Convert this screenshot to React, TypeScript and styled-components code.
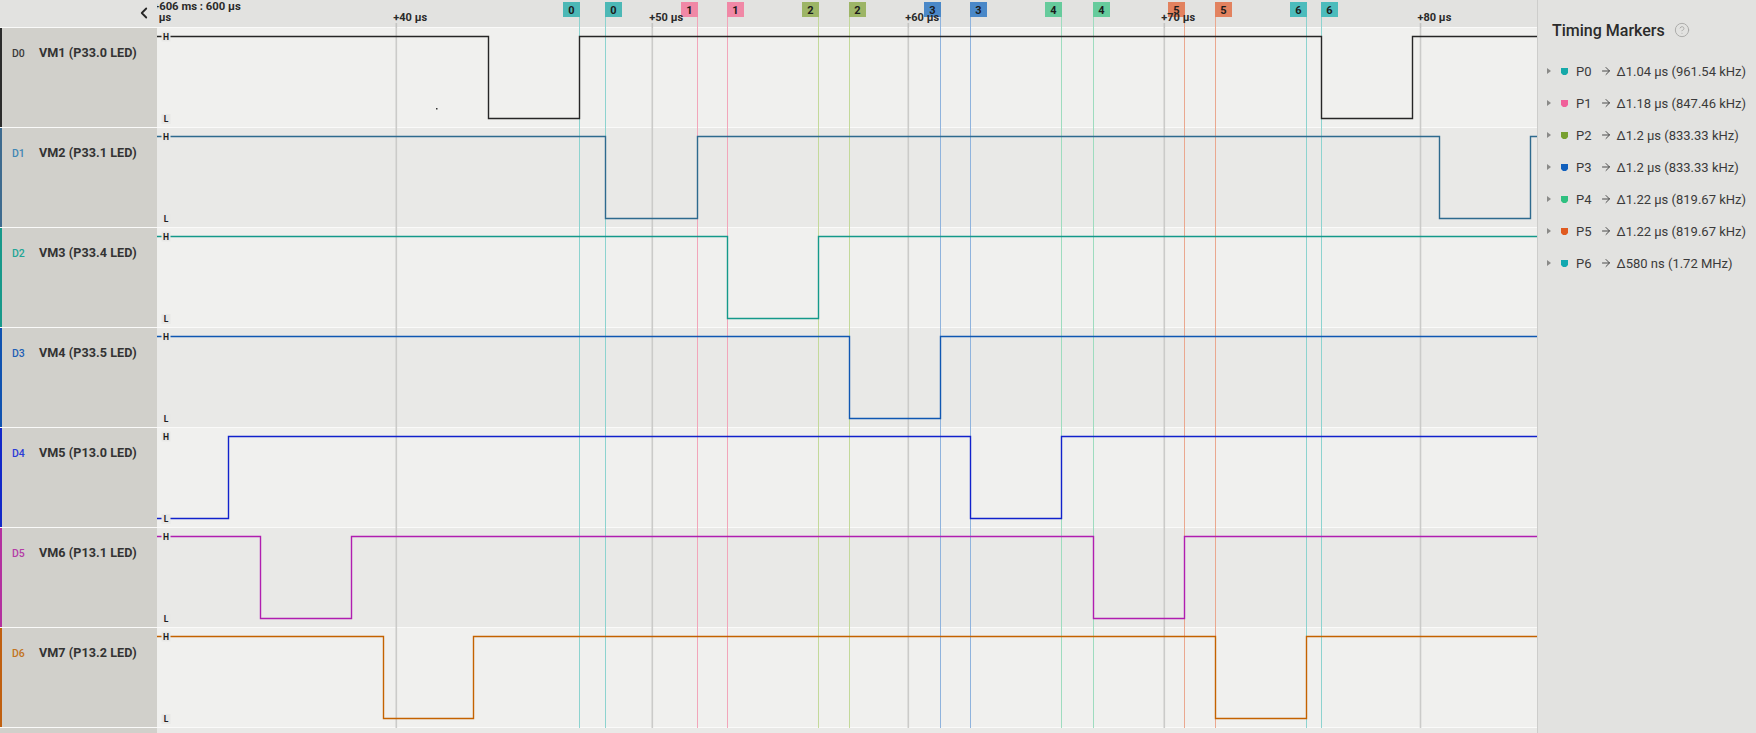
import React from "react";
import styled, { createGlobalStyle } from "styled-components";
import { ChevronLeft, CircleHelp, ArrowRight } from "lucide-react";

const GlobalStyle = createGlobalStyle`
  html, body { margin: 0; padding: 0; background: #e2e2e0; }
  body { font-family: Roboto, "Noto Sans", "Liberation Sans", sans-serif; overflow: hidden; }
  #root { width: 1756px; height: 733px; }
`;

const PLOT_X = 157;
const PLOT_W = 1380;
const ROW_H = 100;
const Y_H = 8.5;
const Y_L = 90.5;

type Channel = {
  id: string;
  name: string;
  color: string;
  tag: string;
  bar: string;
  start: "H" | "L";
  edges: number[];
};

const channels: Channel[] = [
  { id: "D0", name: "VM1 (P33.0 LED)", color: "#262626", tag: "#3a3a3a", bar: "#2b2b2b", start: "H", edges: [488, 579, 1321, 1412] },
  { id: "D1", name: "VM2 (P33.1 LED)", color: "#2e6a8e", tag: "#3f86b4", bar: "#3e6b8f", start: "H", edges: [605, 697, 1439, 1530] },
  { id: "D2", name: "VM3 (P33.4 LED)", color: "#14998a", tag: "#22a596", bar: "#17998a", start: "H", edges: [727, 818] },
  { id: "D3", name: "VM4 (P33.5 LED)", color: "#0f57b2", tag: "#1e5fb5", bar: "#1052b0", start: "H", edges: [849, 940] },
  { id: "D4", name: "VM5 (P13.0 LED)", color: "#1122cc", tag: "#2b3bd6", bar: "#1228c8", start: "L", edges: [228, 970, 1061] },
  { id: "D5", name: "VM6 (P13.1 LED)", color: "#b01eb0", tag: "#b43ca6", bar: "#b3309f", start: "H", edges: [260, 351, 1093, 1184] },
  { id: "D6", name: "VM7 (P13.2 LED)", color: "#c46200", tag: "#c27320", bar: "#c06010", start: "H", edges: [383, 473, 1215, 1306] },
];

type Marker = { n: string; flag: string; line: string; icon: string; a: number; b: number; delta: string };

const markers: Marker[] = [
  { n: "0", flag: "#4cb8b6", line: "#8dd3cf", icon: "#16a9a9", a: 579, b: 605, delta: "Δ1.04 µs (961.54 kHz)" },
  { n: "1", flag: "#f088a6", line: "#f2a6ba", icon: "#f0609a", a: 697, b: 727, delta: "Δ1.18 µs (847.46 kHz)" },
  { n: "2", flag: "#9db566", line: "#c3d99a", icon: "#78a030", a: 818, b: 849, delta: "Δ1.2 µs (833.33 kHz)" },
  { n: "3", flag: "#4a88c8", line: "#8fb3dd", icon: "#1160bd", a: 940, b: 970, delta: "Δ1.2 µs (833.33 kHz)" },
  { n: "4", flag: "#66cb9c", line: "#9edcbf", icon: "#2fc080", a: 1061, b: 1093, delta: "Δ1.22 µs (819.67 kHz)" },
  { n: "5", flag: "#e2825f", line: "#eaa88f", icon: "#e05a20", a: 1184, b: 1215, delta: "Δ1.22 µs (819.67 kHz)" },
  { n: "6", flag: "#4cbcbc", line: "#8dd3cf", icon: "#12a8b0", a: 1306, b: 1321, delta: "Δ580 ns (1.72 MHz)" },
];

const grid = [
  { x: 140.3, label: "+30 µs" },
  { x: 396.3, label: "+40 µs" },
  { x: 652.3, label: "+50 µs" },
  { x: 908.3, label: "+60 µs" },
  { x: 1164.3, label: "+70 µs" },
  { x: 1420.5, label: "+80 µs" },
];

const lx = (x: number) => x - PLOT_X;

const Page = styled.div`
  display: flex;
  width: 1756px;
  height: 733px;
  overflow: hidden;
`;

const Scope = styled.div`
  width: 1537px;
  display: flex;
  flex-direction: column;
  background: #e9e9e7;
`;

const HeaderBar = styled.div`
  display: flex;
  height: 28px;
  flex: none;
`;

const HeaderLeft = styled.div`
  width: 157px;
  height: 28px;
  flex: none;
  box-sizing: border-box;
  border-bottom: 1px solid #fafaf9;
  background: #e2e2e0;
  display: flex;
  align-items: center;
  justify-content: flex-end;
  padding: 0 4px 1px 0;
  color: #262626;
`;

const AxisSvg = styled.svg`
  display: block;
  flex: none;
  font-family: Roboto, "Liberation Sans", sans-serif;
`;

const Row = styled.div`
  display: flex;
  height: ${ROW_H}px;
  flex: none;
`;

const LabelCell = styled.div<{ $bar: string }>`
  width: 157px;
  height: 100px;
  flex: none;
  border-bottom: 1px solid #fafaf9;
  background: #d1d0cb;
  box-shadow: inset 2px 0 0 ${(p) => p.$bar};
  display: flex;
  align-items: baseline;
  padding: 17px 0 0 12px;
  box-sizing: border-box;
`;

const Tag = styled.span<{ $color: string }>`
  width: 27px;
  font-size: 10.5px;
  font-weight: 500;
  color: ${(p) => p.$color};
`;

const ChannelName = styled.span`
  font-size: 12.6px;
  font-weight: 700;
  color: #333;
  letter-spacing: 0.05px;
  white-space: nowrap;
`;

const PlotSvg = styled.svg`
  display: block;
  flex: none;
  font-family: Roboto, "Liberation Sans", sans-serif;
`;

const Filler = styled.div`
  flex: 1;
  display: flex;
`;

const FillerLabel = styled.div`
  width: 157px;
  background: #d1d0cb;
`;

const FillerPlot = styled.div`
  flex: 1;
  background: #e9e9e7;
`;

const Panel = styled.aside`
  flex: 1;
  background: #e2e2e0;
  border-left: 1px solid #cdcdcb;
  display: flex;
  flex-direction: column;
  color: #3a3a3a;
`;

const PanelTitle = styled.div`
  display: flex;
  align-items: center;
  gap: 9px;
  padding: 20px 0 0 14px;
  height: 20px;
  font-size: 16px;
  font-weight: 500;
  color: #2b2b2b;
  margin-bottom: 15px;
`;

const MarkerList = styled.ul`
  list-style: none;
  margin: 0;
  padding: 0;
`;

const MarkerItem = styled.li`
  display: flex;
  align-items: center;
  height: 32px;
  padding-left: 9px;
  font-size: 13px;
  white-space: nowrap;
`;

const Caret = styled.span`
  width: 0;
  height: 0;
  border-top: 3px solid transparent;
  border-bottom: 3px solid transparent;
  border-left: 4px solid #8a8a88;
  margin-right: 10px;
`;

const MarkerIcon = styled.svg`
  display: block;
  margin-right: 8px;
`;

const MarkerName = styled.span`
  color: #3a3a3a;
`;

const Arrow = styled.span`
  display: flex;
  align-items: center;
  margin: 0 5px 0 8px;
  color: #4a4a4a;
`;

const Delta = styled.span`
  color: #3a3a3a;
`;

function signalPath(ch: Channel): string {
  let level = ch.start;
  let d = `M0 ${level === "H" ? Y_H : Y_L}`;
  for (const e of ch.edges) {
    const x = lx(e) + 0.5;
    d += ` H${x}`;
    level = level === "H" ? "L" : "H";
    d += ` V${level === "H" ? Y_H : Y_L}`;
  }
  d += ` H${PLOT_W}`;
  return d;
}

function VerticalLines({ y1 }: { y1: number }) {
  return (
    <g>
      {grid.map((g) => (
        <line key={g.label} x1={lx(g.x)} x2={lx(g.x)} y1={0} y2={y1} stroke="#cbcbc9" strokeWidth={1.6} />
      ))}
      {markers.map((m) => (
        <g key={m.n}>
          <line x1={lx(m.a) + 0.5} x2={lx(m.a) + 0.5} y1={0} y2={y1} stroke={m.line} strokeWidth={1} />
          <line x1={lx(m.b) + 0.5} x2={lx(m.b) + 0.5} y1={0} y2={y1} stroke={m.line} strokeWidth={1} />
        </g>
      ))}
    </g>
  );
}

function LevelMark({ y, text }: { y: number; text: string }) {
  return (
    <g>
      <rect x={4.5} y={y - 5} width={9} height={10} fill="#e8e8e6" />
      <text x={9} y={y + 3} textAnchor="middle" fontSize={8.5} fontWeight={700} fill="#1e1e1e">
        {text}
      </text>
    </g>
  );
}

function Axis() {
  return (
    <AxisSvg width={PLOT_W} height={28}>
      <rect width={PLOT_W} height={27} fill="#e2e2e0" />
      <rect y={27} width={PLOT_W} height={1} fill="#fafaf9" />
      {grid.map((g) => (
        <line key={g.label} x1={lx(g.x)} x2={lx(g.x)} y1={23} y2={28} stroke="#c4c4c2" strokeWidth={1.6} />
      ))}
      {markers.map((m) => (
        <g key={m.n}>
          <line x1={lx(m.a) + 0.5} x2={lx(m.a) + 0.5} y1={17} y2={28} stroke={m.line} />
          <line x1={lx(m.b) + 0.5} x2={lx(m.b) + 0.5} y1={17} y2={28} stroke={m.line} />
          <rect x={lx(m.a) - 16} y={2} width={17} height={15} fill={m.flag} />
          <text x={lx(m.a) - 7.5} y={13.5} textAnchor="middle" fontSize={11} fontWeight={700} fill="#1c1c1c">
            {m.n}
          </text>
          <rect x={lx(m.b)} y={2} width={17} height={15} fill={m.flag} />
          <text x={lx(m.b) + 8.5} y={13.5} textAnchor="middle" fontSize={11} fontWeight={700} fill="#1c1c1c">
            {m.n}
          </text>
        </g>
      ))}
      {grid.map((g) => (
        <text key={g.label} x={lx(g.x) - 3} y={21} fontSize={11} fontWeight={700} fill="#2a2a2a">
          {g.label}
        </text>
      ))}
      <text x={-4} y={10} fontSize={11.3} fontWeight={700} fill="#2a2a2a">
        +606 ms : 600 µs
      </text>
    </AxisSvg>
  );
}

function ChannelRow({ ch, index }: { ch: Channel; index: number }) {
  const bg = index % 2 === 0 ? "#f0f0ee" : "#e9e9e7";
  return (
    <Row>
      <LabelCell $bar={ch.bar}>
        <Tag $color={ch.tag}>{ch.id}</Tag>
        <ChannelName>{ch.name}</ChannelName>
      </LabelCell>
      <PlotSvg width={PLOT_W} height={ROW_H}>
        <rect width={PLOT_W} height={99} fill={bg} />
        <rect y={99} width={PLOT_W} height={1} fill="#fafaf9" />
        <VerticalLines y1={ROW_H} />
        <path d={signalPath(ch)} fill="none" stroke={ch.color} strokeWidth={1.4} />
        {index === 0 && <rect x={lx(436)} y={80} width={1.5} height={1.5} fill="#333" />}
        <LevelMark y={Y_H} text="H" />
        <LevelMark y={Y_L + 0.5} text="L" />
      </PlotSvg>
    </Row>
  );
}

export default function App() {
  return (
    <>
      <GlobalStyle />
      <Page>
        <Scope>
          <HeaderBar>
            <HeaderLeft>
              <ChevronLeft size={18} strokeWidth={2.4} />
            </HeaderLeft>
            <Axis />
          </HeaderBar>
          {channels.map((ch, i) => (
            <ChannelRow key={ch.id} ch={ch} index={i} />
          ))}
          <Filler>
            <FillerLabel />
            <FillerPlot />
          </Filler>
        </Scope>
        <Panel>
          <PanelTitle>
            Timing Markers
            <CircleHelp size={16} strokeWidth={1.4} color="#a8a8a6" />
          </PanelTitle>
          <MarkerList>
            {markers.map((m) => (
              <MarkerItem key={m.n}>
                <Caret />
                <MarkerIcon width={7} height={7} viewBox="0 0 7 7">
                  <path d="M0 0H7V5L5 7H2L0 5Z" fill={m.icon} />
                </MarkerIcon>
                <MarkerName>P{m.n}</MarkerName>
                <Arrow>
                  <ArrowRight size={12} strokeWidth={2} />
                </Arrow>
                <Delta>{m.delta}</Delta>
              </MarkerItem>
            ))}
          </MarkerList>
        </Panel>
      </Page>
    </>
  );
}
